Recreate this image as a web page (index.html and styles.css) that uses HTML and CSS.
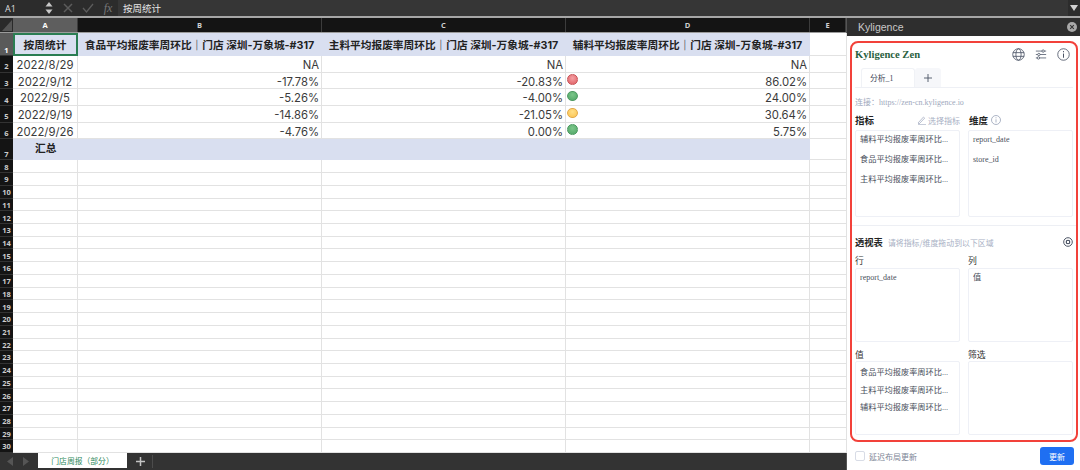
FILE: index.html
```html
<!DOCTYPE html>
<html lang="zh">
<head>
<meta charset="utf-8">
<title>Kyligence Zen</title>
<link rel="stylesheet" href="styles.css">
</head>
<body>
<div class="app">
  <div class="fbar">
    <div class="namebox">A1</div>
    <svg class="stepper" width="10" height="14" viewBox="0 0 10 14"><path d="M5 1l3.5 4.500h-7z" fill="#c8c8c8"/><path d="M5 13l3.500-4.500h-7z" fill="#c8c8c8"/></svg>
    <svg class="ficon" width="20" height="12" viewBox="0 0 12 12"><path d="M2 2l8 8M10 2l-8 8" stroke="#5c5c5c" stroke-width="1.500" fill="none"/></svg>
    <svg class="ficon" width="20" height="12" viewBox="0 0 12 12"><path d="M1 6l3.500 4L11 2" stroke="#5c5c5c" stroke-width="1.300" fill="none"/></svg>
    <span class="fx">fx</span>
    <div class="finput">按周统计</div>
    <svg class="fdrop" width="8" height="6" viewBox="0 0 8 6"><path d="M0 0h8L4 6z" fill="#d0d0d0"/></svg>
  </div>
  <div class="main">
    <div class="sheetwrap">
      <div class="sheet">
        <div class="row head">
          <div class="rh corner"><svg width="13" height="15" viewBox="0 0 13 15"><path d="M12 2v11H2z" fill="#555"/></svg></div>
          <div class="ch a active">A</div><div class="ch w">B</div><div class="ch w">C</div><div class="ch w">D</div><div class="ch e">E</div>
        </div>
        <div class="row r1">
          <div class="rh active">1</div>
          <div class="c a fill b center sel">按周统计<i class="handle"></i></div>
          <div class="c w fill b center">食品平均报废率周环比｜门店 深圳-万象城-#317</div>
          <div class="c w fill b center">主料平均报废率周环比｜门店 深圳-万象城-#317</div>
          <div class="c w fill b center">辅料平均报废率周环比｜门店 深圳-万象城-#317</div>
          <div class="c e"></div>
        </div>
        <div class="row rd">
          <div class="rh">2</div><div class="c a center">2022/8/29</div><div class="c w num">NA</div><div class="c w num">NA</div><div class="c w num">NA</div><div class="c e"></div>
        </div>
        <div class="row rd">
          <div class="rh">3</div><div class="c a center">2022/9/12</div><div class="c w num">-17.78%</div><div class="c w num">-20.83%</div><div class="c w num"><i class="dot red"></i>86.02%</div><div class="c e"></div>
        </div>
        <div class="row rd">
          <div class="rh">4</div><div class="c a center">2022/9/5</div><div class="c w num">-5.26%</div><div class="c w num">-4.00%</div><div class="c w num"><i class="dot green"></i>24.00%</div><div class="c e"></div>
        </div>
        <div class="row rd">
          <div class="rh">5</div><div class="c a center">2022/9/19</div><div class="c w num">-14.86%</div><div class="c w num">-21.05%</div><div class="c w num"><i class="dot yellow"></i>30.64%</div><div class="c e"></div>
        </div>
        <div class="row rd">
          <div class="rh">6</div><div class="c a center">2022/9/26</div><div class="c w num">-4.76%</div><div class="c w num">0.00%</div><div class="c w num"><i class="dot green"></i>5.75%</div><div class="c e"></div>
        </div>
        <div class="row r7">
          <div class="rh">7</div><div class="c a fill b center total">汇总</div><div class="c w fill"></div><div class="c w fill"></div><div class="c w fill"></div><div class="c e"></div>
        </div>
        <div class="blank">
          <div class="row"><div class="rh">8</div><div class="c a"></div><div class="c w"></div><div class="c w"></div><div class="c w"></div><div class="c e"></div></div>
          <div class="row"><div class="rh">9</div><div class="c a"></div><div class="c w"></div><div class="c w"></div><div class="c w"></div><div class="c e"></div></div>
          <div class="row"><div class="rh">10</div><div class="c a"></div><div class="c w"></div><div class="c w"></div><div class="c w"></div><div class="c e"></div></div>
          <div class="row"><div class="rh">11</div><div class="c a"></div><div class="c w"></div><div class="c w"></div><div class="c w"></div><div class="c e"></div></div>
          <div class="row"><div class="rh">12</div><div class="c a"></div><div class="c w"></div><div class="c w"></div><div class="c w"></div><div class="c e"></div></div>
          <div class="row"><div class="rh">13</div><div class="c a"></div><div class="c w"></div><div class="c w"></div><div class="c w"></div><div class="c e"></div></div>
          <div class="row"><div class="rh">14</div><div class="c a"></div><div class="c w"></div><div class="c w"></div><div class="c w"></div><div class="c e"></div></div>
          <div class="row"><div class="rh">15</div><div class="c a"></div><div class="c w"></div><div class="c w"></div><div class="c w"></div><div class="c e"></div></div>
          <div class="row"><div class="rh">16</div><div class="c a"></div><div class="c w"></div><div class="c w"></div><div class="c w"></div><div class="c e"></div></div>
          <div class="row"><div class="rh">17</div><div class="c a"></div><div class="c w"></div><div class="c w"></div><div class="c w"></div><div class="c e"></div></div>
          <div class="row"><div class="rh">18</div><div class="c a"></div><div class="c w"></div><div class="c w"></div><div class="c w"></div><div class="c e"></div></div>
          <div class="row"><div class="rh">19</div><div class="c a"></div><div class="c w"></div><div class="c w"></div><div class="c w"></div><div class="c e"></div></div>
          <div class="row"><div class="rh">20</div><div class="c a"></div><div class="c w"></div><div class="c w"></div><div class="c w"></div><div class="c e"></div></div>
          <div class="row"><div class="rh">21</div><div class="c a"></div><div class="c w"></div><div class="c w"></div><div class="c w"></div><div class="c e"></div></div>
          <div class="row"><div class="rh">22</div><div class="c a"></div><div class="c w"></div><div class="c w"></div><div class="c w"></div><div class="c e"></div></div>
          <div class="row"><div class="rh">23</div><div class="c a"></div><div class="c w"></div><div class="c w"></div><div class="c w"></div><div class="c e"></div></div>
          <div class="row"><div class="rh">24</div><div class="c a"></div><div class="c w"></div><div class="c w"></div><div class="c w"></div><div class="c e"></div></div>
          <div class="row"><div class="rh">25</div><div class="c a"></div><div class="c w"></div><div class="c w"></div><div class="c w"></div><div class="c e"></div></div>
          <div class="row"><div class="rh">26</div><div class="c a"></div><div class="c w"></div><div class="c w"></div><div class="c w"></div><div class="c e"></div></div>
          <div class="row"><div class="rh">27</div><div class="c a"></div><div class="c w"></div><div class="c w"></div><div class="c w"></div><div class="c e"></div></div>
          <div class="row"><div class="rh">28</div><div class="c a"></div><div class="c w"></div><div class="c w"></div><div class="c w"></div><div class="c e"></div></div>
          <div class="row"><div class="rh">29</div><div class="c a"></div><div class="c w"></div><div class="c w"></div><div class="c w"></div><div class="c e"></div></div>
          <div class="row"><div class="rh">30</div><div class="c a"></div><div class="c w"></div><div class="c w"></div><div class="c w"></div><div class="c e"></div></div>
        </div>
      </div>
      <div class="tabs">
        <svg class="tabarrow" width="7" height="9" viewBox="0 0 7 9"><path d="M6 0v9L0 4.500z" fill="#555"/></svg>
        <svg class="tabarrow" width="7" height="9" viewBox="0 0 7 9"><path d="M1 0v9l6-4.500z" fill="#555"/></svg>
        <div class="sheettab">门店周报（部分）</div>
        <svg class="addsheet" width="9" height="9" viewBox="0 0 9 9"><path d="M4.500 0v9M0 4.500h9" stroke="#c4c4c4" stroke-width="1.500"/></svg>
        <div class="tabsep"></div>
      </div>
    </div>
    <aside class="pane">
      <div class="panehead">
        <span>Kyligence</span>
        <svg width="10" height="10" viewBox="0 0 12 12"><circle cx="6" cy="6" r="6" fill="#a8a8a8"/><path d="M3.800 3.800l4.400 4.400M8.200 3.800l-4.400 4.400" stroke="#333" stroke-width="1.300"/></svg>
      </div>
      <div class="panebody">
        <div class="zen">
          <div class="zenhead">
            <h1>Kyligence Zen</h1>
            <div class="zenicons">
              <svg width="13" height="13" viewBox="0 0 14 14" fill="none" stroke="#4a5365" stroke-width=".9"><circle cx="7" cy="7" r="6.200"/><ellipse cx="7" cy="7" rx="2.800" ry="6.200"/><path d="M1 5h12M1 9h12"/></svg>
              <svg width="12" height="11" viewBox="0 0 14 12" fill="none" stroke="#4a5365" stroke-width=".9"><path d="M1 2h12M1 6h12M1 10h12"/><circle cx="9.500" cy="2" r="1.400" fill="#fff"/><circle cx="4.500" cy="6" r="1.400" fill="#fff"/><circle cx="4" cy="10" r="1.400" fill="#fff"/></svg>
              <svg width="13" height="13" viewBox="0 0 14 14" fill="none" stroke="#4a5365"><circle cx="7" cy="7" r="6.200" stroke-width=".9"/><path d="M7 6v4.500" stroke-width="1.100"/><path d="M7 3.300v1.300" stroke-width="1.100"/></svg>
            </div>
          </div>
          <div class="ztabs">
            <div class="ztab">分析_1</div>
            <div class="ztab plus"><svg width="8" height="8" viewBox="0 0 8 8"><path d="M4 0v8M0 4h8" stroke="#4a5365" stroke-width=".9"/></svg></div>
          </div>
          <div class="conn">连接：https://zen-cn.kyligence.io</div>
          <div class="two fields">
            <div class="col">
              <div class="lab"><b>指标</b><span class="pick"><svg width="9" height="9" viewBox="0 0 9 9" fill="none" stroke="#a8b0c4" stroke-width=".8"><path d="M1 7l5.500-6 1.200 1.100L2 8z"/><path d="M1 8.700h8"/></svg>选择指标</span></div>
              <div class="box bigbox">
                <div class="item">辅料平均报废率周环比...</div>
                <div class="item">食品平均报废率周环比...</div>
                <div class="item">主料平均报废率周环比...</div>
              </div>
            </div>
            <div class="col">
              <div class="lab start"><b>维度</b><svg width="10" height="10" viewBox="0 0 10 10" fill="none" stroke="#98a2b8" stroke-width=".8"><circle cx="5" cy="5" r="4.500"/><path d="M5 4.300v3.200M5 2.300v1"/></svg></div>
              <div class="box bigbox">
                <div class="item latin">report_date</div>
                <div class="item latin">store_id</div>
              </div>
            </div>
          </div>
          <div class="divider"></div>
          <div class="pivothead">
            <b>透视表</b><span>请将指标/维度拖动到以下区域</span>
            <svg width="10" height="10" viewBox="0 0 10 10" fill="none" stroke="#3b4456"><circle cx="5" cy="5" r="4.300" stroke-width=".9"/><circle cx="5" cy="5" r="1.800" stroke-width="1.100"/></svg>
          </div>
          <div class="two pivot">
            <div class="col"><div class="sub">行</div><div class="box pbox"><div class="pi latin">report_date</div></div></div>
            <div class="col"><div class="sub">列</div><div class="box pbox"><div class="pi">值</div></div></div>
          </div>
          <div class="two pivot second">
            <div class="col"><div class="sub">值</div>
              <div class="box pbox">
                <div class="pi tight">食品平均报废率周环比...</div>
                <div class="pi tight">主料平均报废率周环比...</div>
                <div class="pi tight">辅料平均报废率周环比...</div>
              </div>
            </div>
            <div class="col"><div class="sub">筛选</div><div class="box pbox"></div></div>
          </div>
        </div>
        <div class="foot">
          <label class="delay"><i class="check"></i>延迟布局更新</label>
          <button class="update" type="button">更新</button>
        </div>
      </div>
    </aside>
  </div>
</div>
</body>
</html>
```

FILE: styles.css
```css
* { box-sizing: border-box; }
html, body { margin: 0; padding: 0; }
body { width: 1080px; height: 470px; overflow: hidden; background: #333; font-family: "Inter", "Noto Sans CJK SC", sans-serif; }
.app { display: flex; flex-direction: column; height: 470px; }

.fbar { height: 18px; flex: none; display: flex; align-items: center; background: #2c2c2c; border-bottom: 2px solid #a6a6a6; color: #e6e6e6; font-size: 9px; }
.namebox { width: 44px; padding-left: 5px; font-family: "Open Sans", sans-serif; color: #ddd; }
.stepper { flex: none; margin-right: 4px; }
.ficon { flex: none; margin-right: 0; }
.fx { width: 20px; flex: none; text-align: center; font: italic 12px "Liberation Serif", serif; color: #777; }
.finput { flex: 1; height: 16px; background: #363636; color: #e8e8e8; font: 9.500px/16px "Noto Sans CJK SC", sans-serif; padding-left: 5px; }
.fdrop { flex: none; margin: 0 2px 0 2px; }

.main { flex: 1; display: flex; min-height: 0; }
.sheetwrap { width: 847px; flex: none; display: flex; flex-direction: column; background: #fff; border-right: 1px solid #555; }
.sheet { flex: 1; display: flex; flex-direction: column; min-height: 0; }
.row { display: flex; flex: 1 1 0; min-height: 0; }
.row.head { flex: none; height: 15px; border-bottom: 1px solid #9b9b9b; }
.row.r1 { flex: none; height: 23px; }
.row.rd { flex: none; height: 16.700px; }
.row.rd .c { padding-top: 2px; }
.row.r7 { flex: none; height: 21px; }
.blank { flex: 1; display: flex; flex-direction: column; min-height: 0; }

.rh { width: 13px; flex: none; background: #141414; color: #ccc; font: 700 7.500px/1 "Open Sans", sans-serif; display: flex; align-items: flex-end; justify-content: center; padding-bottom: 1px; border-bottom: 1px solid #333; }
.rh.active { background: #5a5a5a; color: #fff; }
.rh.corner { background: #2a2a2a; padding: 0; border: 0; display: block; }
.rh.corner svg { display: block; }
.ch { background: #141414; color: #d0d0d0; font: 700 7.500px/15px "Open Sans", sans-serif; text-align: center; border-right: 1px solid #3c3c3c; }
.ch.active { background: #5e5e5e; color: #fff; }
.a { width: 65px; flex: none; }
.w { width: 244px; flex: none; }
.e { width: 37px; flex: none; }
.ch.e { width: 36px; }

.c { position: relative; border-right: 1px solid #e2e2e2; border-bottom: 1px solid #e2e2e2; font-size: 11.300px; color: #3a3a3a; display: flex; align-items: center; font-family: "Inter", "Noto Sans CJK SC", sans-serif; font-weight: 400; background: #fff; }
.center { justify-content: center; }
.num { justify-content: flex-end; padding-right: 2px; }
.fill { background: #d9dff0; border-color: #d9dff0; }
.b { font-weight: 700; font-size: 10.700px; color: #222; }
.total { justify-content: flex-start; padding-left: 22px; padding-bottom: 3px; }
.sel { outline: 2px solid #2a7d52; outline-offset: -2px; border-color: transparent; }
.handle { position: absolute; right: -3px; bottom: -2px; width: 4px; height: 4px; background: #2a7d52; }
.dot { position: absolute; left: 1px; top: 1.500px; width: 10.500px; height: 10.500px; border-radius: 50%; }
.dot.red { background: radial-gradient(circle at 50% 35%, #f4a0a4, #de5b60); border: 1px solid #c9585c; }
.dot.green { background: radial-gradient(circle at 50% 35%, #7cc68a, #4ea565); border: 1px solid #4f9a63; }
.dot.yellow { background: radial-gradient(circle at 50% 35%, #ffdf88, #fbc24e); border: 1px solid #e2a94a; }

.tabs { height: 17px; flex: none; background: #333; display: flex; align-items: center; padding-left: 7px; }
.tabarrow { flex: none; margin-right: 8px; }
.sheettab { width: 89px; height: 15px; background: #fff; color: #2f8a5c; font: 7.800px/16px "Noto Sans CJK SC", sans-serif; text-align: center; flex: none; margin-left: 1px; align-self: flex-start; }
.addsheet { flex: none; margin: 0 7px 0 9px; }
.tabsep { width: 1px; height: 13px; background: #4c4c4c; }

.pane { flex: 1; display: flex; flex-direction: column; background: #fff; font-family: "Liberation Serif", "Noto Sans CJK SC", serif; }
.panehead { height: 18px; flex: none; background: #2e2e2e; display: flex; align-items: center; justify-content: space-between; padding: 0 4px 0 11px; color: #c9c9c9; font: 10.500px "Liberation Sans", sans-serif; }
.panebody { flex: 1; display: flex; flex-direction: column; padding: 5px 3px 0 3px; }
.zen { height: 401px; flex: none; border: 2px solid #f2413a; border-radius: 8px; padding: 3px; display: flex; flex-direction: column; }
.zenhead { display: flex; justify-content: space-between; align-items: center; height: 16px; flex: none; }
.zenhead h1 { margin: 0; font: 700 10.600px "Liberation Serif", serif; color: #2a6140; }
.zenicons { display: flex; align-items: center; gap: 10px; padding-right: 3px; }
.ztabs { display: flex; height: 20px; flex: none; margin-top: 6px; border-bottom: 1px solid #eef0f5; padding-left: 6px; }
.ztab { width: 54px; background: #fff; border: 1px solid #f0f2f6; border-bottom: 0; border-radius: 3px 3px 0 0; font: 7.800px/20px "Liberation Serif", "Noto Sans CJK SC", serif; color: #3b4456; padding-left: 8px; }
.ztab.plus { width: 26px; background: #f6f7fa; border: 0; padding: 0; display: flex; align-items: center; justify-content: center; }
.conn { margin-top: 8px; height: 14px; font-size: 8px; line-height: 13px; color: #a0a9bd; }
.two { display: flex; gap: 8px; flex: none; }
.col { width: 105px; flex: none; display: flex; flex-direction: column; }
.lab { height: 18px; flex: none; display: flex; align-items: center; justify-content: space-between; font-size: 9.500px; color: #222; margin-top: 1px; margin-bottom: 1px; }
.lab.start { justify-content: flex-start; gap: 3px; padding-left: 1px; }
.lab b { font: 700 9.500px "Noto Sans CJK SC", sans-serif; }
.pick { font: 8px "Noto Sans CJK SC", sans-serif; color: #a8b0c4; display: flex; align-items: center; gap: 2px; }
.box { border: 1px solid #eef0f6; border-radius: 2px; background: #fff; }
.bigbox { height: 87px; }
.item { height: 20px; padding-left: 4px; font: 8.200px/18px "Liberation Serif", "Noto Sans CJK SC", serif; color: #4a4f5c; white-space: nowrap; overflow: hidden; }
.item.latin, .pi.latin { font-size: 8px; }
.divider { height: 1px; background: #edeff4; margin: 8px -3px 0; flex: none; }
.pivothead { height: 14px; margin-top: 9px; flex: none; display: flex; align-items: center; gap: 5px; }
.pivothead b { font: 700 9.300px "Noto Sans CJK SC", sans-serif; color: #222; }
.pivothead span { flex: 1; font: 7.900px "Noto Sans CJK SC", sans-serif; color: #a8b0c4; }
.sub { height: 14px; flex: none; font: 8.800px/14px "Noto Sans CJK SC", sans-serif; color: #333; }
.pivot { margin-top: 5px; }
.second { margin-top: 6px; }
.second .sub { line-height: 13px; height: 13px; }
.pbox { height: 74px; padding: 2px 0 0 4px; }
.pi { height: 14px; font: 8.200px/14px "Liberation Serif", "Noto Sans CJK SC", serif; color: #4a4f5c; white-space: nowrap; overflow: hidden; }
.pi.tight { height: 17.500px; line-height: 18px; }
.foot { flex: 1; display: flex; align-items: center; justify-content: space-between; padding: 0 4px 0 5px; }
.delay { display: flex; align-items: center; gap: 4px; font: 8px "Noto Sans CJK SC", sans-serif; color: #7d8596; }
.check { width: 10px; height: 10px; border: 1px solid #d8dce6; border-radius: 2px; }
.update { width: 34px; height: 18px; border: 0; padding: 0; border-radius: 3px; background: #1f6ff2; color: #fff; font: 8px "Noto Sans CJK SC", sans-serif; }
```
